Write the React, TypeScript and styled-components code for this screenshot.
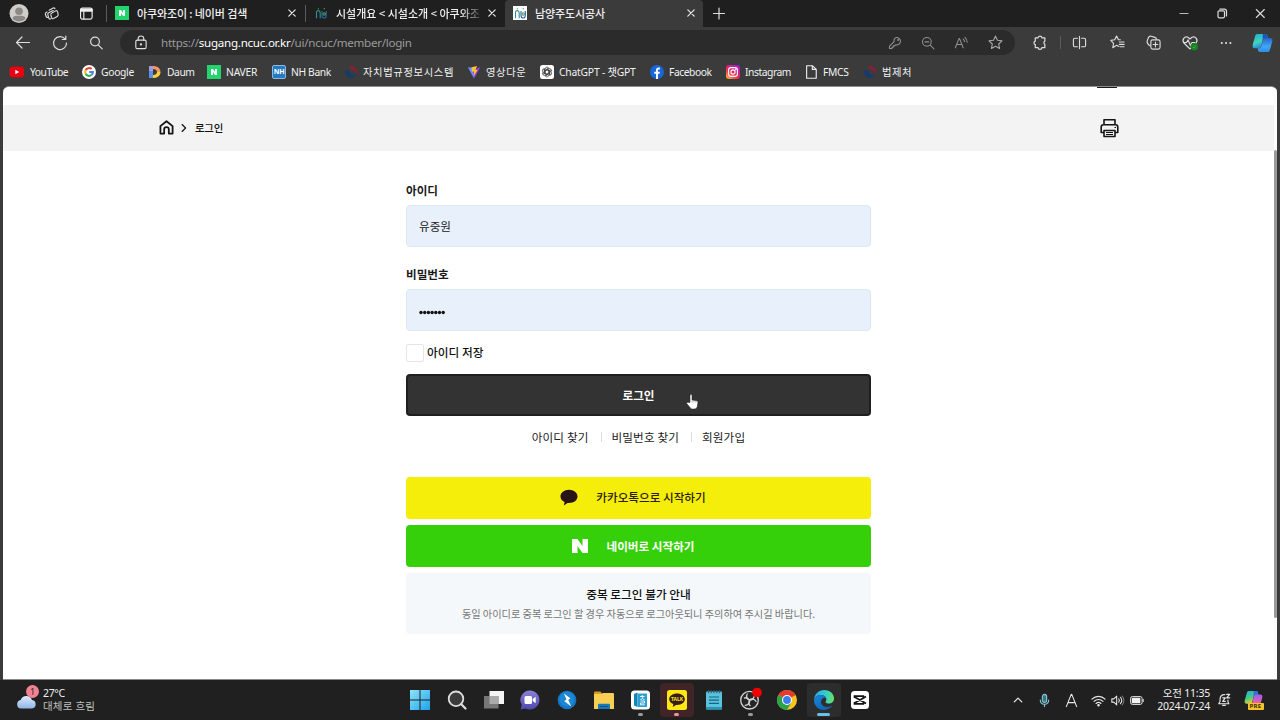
import React from "react";
import styled, { createGlobalStyle } from "styled-components";

const GlobalStyle = createGlobalStyle`
  * { box-sizing: border-box; }
  html, body { margin: 0; padding: 0; background: #202020; }
  body { overflow: hidden; }
  svg { display: block; flex: none; overflow: visible; }
`;

const ui = `"Noto Sans", "Noto Sans CJK KR", sans-serif`;
const kr = `"Noto Sans CJK KR", "Noto Sans", sans-serif`;

const Desktop = styled.div`
  width: 1280px;
  height: 720px;
  display: flex;
  flex-direction: column;
  background: #3b3b3b;
  font-family: ${ui};
  color: #f1f1f1;
  overflow: hidden;
`;

/* ---------- browser chrome ---------- */

const TabStrip = styled.div`
  height: 27px;
  flex: none;
  display: flex;
  background: #1f1f1f;
`;

const Cell = styled.div<{ $w: number }>`
  width: ${(p) => p.$w}px;
  flex: none;
  display: flex;
  align-items: center;
  justify-content: center;
`;

const Rule = styled.div<{ $h?: number }>`
  width: 1px;
  height: ${(p) => p.$h ?? 17}px;
  flex: none;
  align-self: center;
  background: #5c5c5c;
`;

const Tab = styled.div<{ $w: number; $active?: boolean; $pr: number }>`
  width: ${(p) => p.$w}px;
  flex: none;
  display: flex;
  align-items: center;
  padding: 0 ${(p) => p.$pr}px 1px 8px;
  background: ${(p) => (p.$active ? "#3b3b3b" : "transparent")};
  border-radius: ${(p) => (p.$active ? "4px 4px 0 0" : "0")};
`;

const TabTitle = styled.div<{ $w: number; $fade?: boolean; $ls?: number }>`
  width: ${(p) => p.$w}px;
  margin-left: 8px;
  margin-right: auto;
  white-space: nowrap;
  font: 500 11px/20px ${kr};
  letter-spacing: ${(p) => p.$ls ?? 0}px;
  color: #f0f0f0;
  ${(p) => p.$fade && "mask-image: linear-gradient(to right, #000 86%, transparent 103%);"}
`;

const Toolbar = styled.div`
  height: 31px;
  flex: none;
  display: flex;
  align-items: center;
  padding-left: 5px;
`;

const AddressBar = styled.div`
  width: 895px;
  height: 25px;
  margin-left: 6px;
  flex: none;
  display: flex;
  align-items: center;
  padding-left: 13px;
  padding-right: 3px;
  border-radius: 13px;
  background: #2b2b2b;
`;

const Url = styled.div`
  margin-left: 13px;
  margin-right: auto;
  font: 400 11.6px/24px ${ui};
  letter-spacing: -0.27px;
  color: #9b9b9b;
  b { font-weight: 400; color: #fff; }
`;

const Bookmarks = styled.div`
  height: 28px;
  flex: none;
  display: flex;
  align-items: center;
  padding-left: 9px;
`;

const Bookmark = styled.div<{ $w: number; $ls?: number }>`
  width: ${(p) => p.$w}px;
  flex: none;
  display: flex;
  align-items: center;
  gap: 5px;
  white-space: nowrap;
  font: 400 10.3px/20px ${ui};
  letter-spacing: ${(p) => p.$ls ?? -0.45}px;
  color: #f2f2f2;
`;

/* ---------- page ---------- */

const Viewport = styled.div`
  width: 1274px;
  height: 594px;
  margin-left: 3px;
  flex: none;
  display: flex;
  background: #fff;
  border-top: 1px solid #8d8d8d;
  border-bottom: 1px solid #8a8a8a;
  border-radius: 6px 6px 0 0;
  color: #111;
  font-family: ${kr};
  overflow: hidden;
`;

const Page = styled.main`
  width: 1271px;
  flex: none;
  display: flex;
  flex-direction: column;
  align-items: center;
`;

const HeaderRemnant = styled.div`
  width: 100%;
  height: 18px;
  flex: none;
  padding-left: 1094px;
  &::before {
    content: "";
    display: block;
    width: 20px;
    height: 1px;
    background: #1b1b1b;
  }
`;

const Breadcrumb = styled.nav`
  width: 100%;
  height: 46px;
  flex: none;
  display: flex;
  align-items: center;
  padding: 0 155px 1px 156px;
  background: #f3f3f3;
  font-size: 10.4px;
  font-weight: 500;
  letter-spacing: -0.2px;
`;

const CrumbArrow = styled(Cell)`
  margin-left: 3px;
`;

const Crumb = styled.span`
  margin-left: 5px;
  margin-right: auto;
`;

const Form = styled.form`
  width: 465px;
  padding-top: 29px;
  display: flex;
  flex-direction: column;
`;

const Label = styled.label`
  height: 20px;
  font-size: 11.6px;
  line-height: 20px;
  font-weight: 700;
  color: #1a1a1a;
`;

const Field = styled.div<{ $last?: boolean }>`
  height: 42px;
  margin: 5px 0 ${(p) => (p.$last ? 12 : 17)}px;
  padding: 0 12px;
  display: flex;
  align-items: center;
  background: #e8f0fc;
  border: 1px solid #dfe7ee;
  border-radius: 4px;
  font-size: 11.6px;
  color: #222;
`;

const SaveRow = styled.div`
  height: 19px;
  display: flex;
  align-items: center;
  gap: 3px;
  font-size: 11.7px;
  line-height: 17px;
  font-weight: 500;
  span + span { padding-bottom: 2px; }
`;

const Checkbox = styled.span`
  width: 18px;
  height: 18px;
  border: 1px solid #e6e6e6;
  border-radius: 2px;
  background: #fff;
`;

const LoginButton = styled.div`
  height: 42px;
  margin-top: 12px;
  display: flex;
  align-items: center;
  justify-content: center;
  background: #333;
  border: 2px solid #1f1f1f;
  border-radius: 4px;
  color: #fff;
  font-size: 11.6px;
  letter-spacing: 0.05px;
  font-weight: 700;
`;

const Links = styled.div`
  height: 20px;
  margin-top: 11px;
  display: flex;
  align-items: center;
  justify-content: center;
  font-size: 11.6px;
  letter-spacing: 0.13px;
  color: #222;
  span + span {
    margin-left: 12px;
    padding-left: 11px;
    background: linear-gradient(#dcdcdc, #dcdcdc) left center / 1px 10px no-repeat;
  }
`;

const SocialButton = styled.div<{ $bg: string; $fg: string; $weight: number; $top: number; $gap: number; $lift?: number }>`
  height: 42px;
  margin-top: ${(p) => p.$top}px;
  display: flex;
  align-items: center;
  justify-content: center;
  gap: ${(p) => p.$gap}px;
  padding-right: 11px;
  padding-bottom: ${(p) => p.$lift ?? 0}px;
  border-radius: 4px;
  background: ${(p) => p.$bg};
  color: ${(p) => p.$fg};
  font-size: 11.6px;
  line-height: 18px;
  font-weight: ${(p) => p.$weight};
`;

const Notice = styled.div`
  height: 61px;
  margin-top: 6px;
  padding-top: 11px;
  display: flex;
  flex-direction: column;
  align-items: center;
  background: #f5f8fa;
  border-radius: 4px;
`;

const NoticeTitle = styled.div`
  font-size: 11.7px;
  line-height: 20px;
  font-weight: 500;
  color: #111;
`;

const NoticeText = styled.div`
  font-size: 10.2px;
  line-height: 20px;
  letter-spacing: -0.01px;
  color: #777;
  white-space: nowrap;
`;

const ScrollTrack = styled.div`
  flex: 1;
  padding-top: 63px;
  background: #fdfdfd;
  &::before {
    content: "";
    display: block;
    height: 468px;
    background: #9a9a9a;
    border-radius: 2px;
  }
`;

/* ---------- taskbar ---------- */

const Taskbar = styled.footer`
  height: 40px;
  flex: none;
  display: flex;
  align-items: center;
  background: #202020;
`;

const Weather = styled.div`
  width: 401px;
  flex: none;
  display: flex;
  padding-left: 16px;
  gap: 3px;
  font-size: 10.5px;
  line-height: 13px;
`;

const WeatherText = styled.div`
  padding-top: 1px;
  letter-spacing: -0.35px;
  div + div { color: #c2c2c2; letter-spacing: 0.2px; }
`;

const AppSlot = styled.div<{ $tint?: string }>`
  width: 33.7px;
  height: 34px;
  margin-right: 3px;
  flex: none;
  display: flex;
  flex-direction: column;
  align-items: center;
  padding-top: 7px;
  border-radius: 4px;
  background: ${(p) => p.$tint ?? "transparent"};
`;

const Running = styled.i<{ $w: number; $c: string }>`
  width: ${(p) => p.$w}px;
  height: 3px;
  margin-top: 3px;
  border-radius: 2px;
  background: ${(p) => p.$c};
`;

const Tray = styled.div`
  margin-left: auto;
  display: flex;
  align-items: center;
`;

const Clock = styled.div`
  width: 60px;
  padding-right: 2px;
  text-align: right;
  font-size: 10.5px;
  line-height: 13px;
  letter-spacing: -0.2px;
  white-space: nowrap;
`;

const Pointer = styled.div`
  position: absolute;
  left: 686px;
  top: 394px;
`;

/* ---------- icons ---------- */

type IconProps = { s?: number; c?: string; w?: number; children?: React.ReactNode };
const Line = ({ s = 16, c = "#dcdcdc", w = 1.2, children }: IconProps) => (
  <svg width={s} height={s} viewBox="0 0 16 16" fill="none" stroke={c} strokeWidth={w} strokeLinecap="round" strokeLinejoin="round">
    {children}
  </svg>
);

const Close = () => <Line s={16} w={1.2} c="#e8e8e8"><path d="M4.8 4.8l6.4 6.4M11.2 4.8l-6.4 6.4" /></Line>;

const Avatar = () => (
  <svg width="20" height="20" viewBox="0 0 20 20">
    <circle cx="10" cy="9.500" r="9.5" fill="#cfccca" />
    <circle cx="10" cy="7.2" r="3.8" fill="#8b8886" />
    <path d="M3.6 14.7c0-2.2 2-3 4-3h4.800c2 0 4 .8 4 3-2 2-4 2.700-6.400 2.700s-4.600-.9-6.400-2.700z" fill="#8b8886" />
  </svg>
);

const Naver = () => (
  <svg width="14" height="14" viewBox="0 0 14 14">
    <rect width="14" height="14" fill="#22d46c" />
    <path d="M4 10V4h2l2 3V4h2v6H8L6 7v3z" fill="#fff" />
  </svg>
);

const CityLogo = ({ bg }: { bg?: string }) => (
  <svg width="14" height="14" viewBox="0 0 14 14" fill="none" strokeWidth="1.1">
    {bg && <rect width="14" height="14" fill={bg} />}
    <path d="M2.500 12.300V6" stroke="#2b8ea8" />
    <path d="M2.500 6c.5-2 3.700-2 3.700 1v5.300" stroke="#2f8f8a" />
    <path d="M8 5v4.500c0 3.400 4.300 3.400 4.300 0V5" stroke="#2467a8" />
    <circle cx="10.200" cy="8" r="1.200" stroke="#4a9b60" />
    <path d="M3.800 2.800h1.200M9.600 2.800h1.400" stroke="#4aa46a" />
  </svg>
);

const Gov = () => (
  <svg width="14" height="14" viewBox="0 0 14 14">
    <path d="M1.300 5C.2 9 3 13 7 13c3 0 5-2 5.200-4.600C10.500 11 7 10.700 6.300 8.300 5.800 6.500 3.500 4.500 1.300 5z" fill="#123d6b" />
    <path d="M5 1.600C9 .3 13.500 3 13 7.500c-.1 1-.4 1.600-.8 2C12.500 6.500 9.800 5.500 8.300 4.800 7 4.200 5.500 3.500 5 1.600z" fill="#8c1d38" />
  </svg>
);

const YouTube = () => (
  <svg width="16" height="14" viewBox="0 0 16 14">
    <rect x=".6" y="1.500" width="14.400" height="11" rx="3" fill="#e60012" />
    <path d="M6.300 4.800v4.400L10.200 7z" fill="#fff" />
  </svg>
);

const Google = () => (
  <svg width="14" height="14" viewBox="0 0 14 14" fill="none" strokeWidth="2">
    <circle cx="7" cy="7" r="7" fill="#fff" />
    <path d="M3.600 5.200A3.900 3.900 0 0 1 9.700 4.100" stroke="#ea4335" />
    <path d="M3.600 5.200a3.900 3.900 0 0 0 0 3.600" stroke="#fbbc05" />
    <path d="M3.600 8.800a3.900 3.900 0 0 0 5.900 1.200" stroke="#34a853" />
    <path d="M9.500 10A3.900 3.900 0 0 0 10.900 7.100H7.200" stroke="#4285f4" />
  </svg>
);

const Daum = () => (
  <svg width="14" height="14" viewBox="0 0 14 14">
    <path d="M1 1h4v12H1z" fill="#5b91e8" />
    <path d="M1 1h4v5H1z" fill="#a899dc" />
    <path d="M5 1c4 0 7.500 2 7.500 6H9c0-2-1.500-3-4-3z" fill="#f39a62" />
    <path d="M12.500 7c0 4-3.500 6-7.500 6v-3c2.500 0 4-1 4-3z" fill="#f7cf3f" />
  </svg>
);

const Badge = styled.span`
  width: 14px;
  height: 14px;
  flex: none;
  border-radius: 2px;
  border: 1px solid #8db8df;
  background: #247bc4;
  color: #fff;
  font: 700 7px/12px "Noto Sans", sans-serif;
  letter-spacing: -0.2px;
  text-align: center;
`;

const Prism = () => (
  <svg width="14" height="14" viewBox="0 0 14 14">
    <path d="M.8 2.200L7 13.400 7.500 3z" fill="#6c8cff" />
    <path d="M13.200 2.200L7 13.400 6 5z" fill="#a63ee8" />
    <path d="M4.500 2.200L10 1 8.500 5h2L6.800 11l.3-4.600H4.800z" fill="#ffc32b" />
  </svg>
);

const Gpt = () => (
  <svg width="14" height="14" viewBox="0 0 14 14" fill="none" stroke="#333" strokeWidth=".8">
    <rect width="14" height="14" rx="2.500" fill="#fff" stroke="none" />
    {[0, 60, 120, 180, 240, 300].map((a) => (
      <path key={a} transform={`rotate(${a} 7 7)`} d="M5 7.800V4.200a2 2 0 0 1 3.600-1.200L5.600 4.800M7 4.700l2 1.200" />
    ))}
  </svg>
);

const Facebook = () => (
  <svg width="14" height="14" viewBox="0 0 14 14">
    <circle cx="7" cy="7" r="7" fill="#1766dc" />
    <path d="M6 14V8.800H4.300V6.700H6V5.200C6 3.400 7 2.500 8.600 2.500l1.300.1v1.800h-.9c-.8 0-1 .4-1 1v1.300h1.900l-.3 2.100H8V14z" fill="#fff" />
  </svg>
);

const Instagram = () => (
  <svg width="14" height="14" viewBox="0 0 14 14" fill="none" stroke="#fff" strokeWidth="1.100">
    <defs>
      <linearGradient id="insta" x1="0" y1="1" x2=".8" y2="0">
        <stop offset="0" stopColor="#ffc53d" />
        <stop offset=".45" stopColor="#ee2a4f" />
        <stop offset="1" stopColor="#a11fd0" />
      </linearGradient>
    </defs>
    <rect width="14" height="14" rx="3" fill="url(#insta)" stroke="none" />
    <rect x="2.600" y="2.600" width="8.800" height="8.800" rx="2.500" />
    <circle cx="7" cy="7" r="2.100" />
    <circle cx="9.600" cy="4.400" r=".3" />
  </svg>
);

const Copilot = ({ pre }: { pre?: boolean }) => (
  <svg width={pre ? 19 : 21} height={pre ? 18 : 20} viewBox="0 0 21 20">
    <defs>
      <linearGradient id={pre ? "cpA" : "cpB"} x1="0" y1="0" x2=".4" y2="1">
        <stop offset="0" stopColor={pre ? "#26a9f0" : "#1fa6d8"} />
        <stop offset=".6" stopColor={pre ? "#47ce79" : "#42d6bb"} />
        <stop offset="1" stopColor={pre ? "#f2cc35" : "#2786d8"} />
      </linearGradient>
      <linearGradient id={pre ? "cpC" : "cpD"} x1="0" y1="0" x2="0" y2="1">
        <stop offset="0" stopColor={pre ? "#9a61ed" : "#2466c9"} />
        <stop offset=".6" stopColor={pre ? "#e45bba" : "#43a6f4"} />
        <stop offset="1" stopColor={pre ? "#f7863f" : "#2b8ee9"} />
      </linearGradient>
    </defs>
    <path d="M5 1h8.500c1 0 1.500.6 1.800 1.500L16 5h-3c-1.200 0-1.800.8-2.200 2L9 13.500c-.4 1.200-1 1.800-2.200 1.800H3C.8 15.300.2 13.700.8 11.500L3 3.500C3.400 2 4 1 5 1z" fill={`url(#${pre ? "cpA" : "cpB"})`} />
    <path d="M10.800 1h2.700c1 0 1.500.6 1.800 1.500L16 5h-3c-1.200 0-1.800.8-2.200 2l-.5 1.700z" fill={pre ? "#2673e0" : "#1d57b5"} />
    <path d="M16 19H8c-1 0-1.500-.5-1.800-1.500L5.600 15.300H7c1.200 0 1.800-.6 2.200-1.800L11 7c.4-1.200 1-2 2.200-2H18c2.200 0 2.800 1.600 2.200 3.700L18 16.500c-.4 1.500-1 2.500-2 2.500z" fill={`url(#${pre ? "cpC" : "cpD"})`} />
  </svg>
);

const PreWrap = styled.div`
  position: relative;
  width: 20px;
  height: 20px;
`;

const PreTag = styled.span`
  position: absolute;
  left: 4px;
  top: 13px;
  width: 16px;
  height: 7px;
  border-radius: 1px;
  background: #f3c32d;
  color: #3a2c00;
  font: 700 6px/7px "Noto Sans", sans-serif;
  letter-spacing: 0.4px;
  text-align: center;
`;

const CloudWrap = styled.div`
  position: relative;
  width: 24px;
  height: 28px;
`;

const Count = styled.span`
  position: absolute;
  left: 10px;
  top: -1px;
  width: 13px;
  height: 13px;
  border-radius: 50%;
  background: #f08294;
  color: #3d1a20;
  font: 400 9px/13px ${ui};
  text-align: center;
`;

const TalkWrap = styled.div`
  position: relative;
  height: 20px;
  span {
    position: absolute;
    left: 0;
    top: 4px;
    width: 20px;
    text-align: center;
    color: #ffe812;
    font: 700 5px/10px "Noto Sans", sans-serif;
  }
`;

const Dot = ({ c = "#9a9a9a", w = 5 }) => <Running $w={w} $c={c} />;

const bookmarks: { label: string; w: number; ls?: number; icon: React.ReactNode }[] = [
  { label: "YouTube", w: 73, ls: -0.5, icon: <YouTube /> },
  { label: "Google", w: 66, ls: -0.3, icon: <Google /> },
  { label: "Daum", w: 59, icon: <Daum /> },
  { label: "NAVER", w: 65, ls: -0.2, icon: <Naver /> },
  { label: "NH Bank", w: 72, ls: -0.35, icon: <Badge>NH</Badge> },
  { label: "자치법규정보시스템", w: 123, ls: 0.65, icon: <Gov /> },
  { label: "영상다운", w: 73, ls: 0.6, icon: <Prism /> },
  { label: "ChatGPT - 챗GPT", w: 110, ls: -0.2, icon: <Gpt /> },
  { label: "Facebook", w: 76, icon: <Facebook /> },
  { label: "Instagram", w: 78, icon: <Instagram /> },
  { label: "FMCS", w: 59, ls: -0.3, icon: <Line s={14} c="#eee" w={1.3}><path d="M3 .8h6.500L14 5v10.200H3zM9.500.8V5H14" /></Line> },
  { label: "법제처", w: 60, ls: 0.5, icon: <Gov /> },
];

const StartIcon = () => (
  <svg width="20" height="20" viewBox="0 0 20 20">
    <defs><linearGradient id="win" x1="0" y1="0" x2="1" y2="1"><stop stopColor="#8ee3fb" /><stop offset="1" stopColor="#1ca3ea" /></linearGradient></defs>
    <path d="M0 0h9.500v9.500H0zM10.500 0H20v9.500h-9.500zM0 10.500h9.500V20H0zM10.500 10.500H20V20h-9.500z" fill="url(#win)" />
  </svg>
);
const SearchIcon = () => (
  <svg width="20" height="20" viewBox="0 0 20 20" fill="#3c3c3c" stroke="#dedede" strokeWidth="1.800" strokeLinecap="round">
    <circle cx="9" cy="8.800" r="7.300" /><path d="M14.300 14.200l4.200 4.300" strokeWidth="2.200" />
  </svg>
);
const TaskViewIcon = () => (
  <svg width="20" height="20" viewBox="0 0 20 20">
    <rect x="5.500" y="1" width="14.500" height="13" fill="#f4f4f4" />
    <rect x="0" y="6" width="14.500" height="12.500" fill="#777" />
    <path d="M5.500 6h9v8h-9z" fill="#aaa" />
  </svg>
);
const ChatIcon = () => (
  <svg width="20" height="20" viewBox="0 0 20 20">
    <defs><linearGradient id="chat" x1="0" y1="0" x2="0" y2="1"><stop stopColor="#8a84d6" /><stop offset="1" stopColor="#5046ae" /></linearGradient></defs>
    <path d="M10 .5a9.500 9.500 0 1 1-4.500 17.900L.7 19.500l1-4.700A9.500 9.500 0 0 1 10 .5z" fill="url(#chat)" />
    <rect x="4.500" y="6" width="7.500" height="8" rx="1.500" fill="#fff" /><path d="M12.700 9l3-2.200v6.400l-3-2.200z" fill="#fff" />
  </svg>
);
const BoltIcon = () => (
  <svg width="20" height="20" viewBox="0 0 20 20">
    <circle cx="10" cy="10" r="9.300" fill="#1675c4" /><circle cx="10" cy="9" r="7.500" fill="#1c87d4" />
    <path d="M7 3.500l6.500 5-2.300 1.300 3 6.700-7-5.500 2.300-1.200z" fill="#fff" />
  </svg>
);
const FolderIcon = () => (
  <svg width="20" height="20" viewBox="0 0 20 20">
    <path d="M0 3c0-.8.400-1.500 1.300-1.500h5L8.500 4H0z" fill="#d99a20" />
    <path d="M0 4h7.500l1.500-1h9.500c1 0 1.500.5 1.500 1.300V19H0z" fill="#f8cf55" />
    <path d="M4 15c0-.8.500-1.200 1.200-1.200h9.600c.7 0 1.200.4 1.200 1.200v4H4z" fill="#1878b8" />
    <path d="M6 16.500h8" stroke="#0e568c" />
  </svg>
);
const DictIcon = () => (
  <svg width="19" height="20" viewBox="0 0 19 20" fill="none">
    <rect y=".5" width="19" height="19" rx="3.500" fill="#fff" />
    <path d="M3 4l3.500-1.500v14.500L3 15.500z" fill="#1684b5" /><path d="M6.500 3.500H16v13.500H6.500z" fill="#2ba0d0" />
    <path d="M9 6.500h4.500M11.200 5v1.500M9.500 9.500c1.500 0 2-1 2-2 0 1 .5 2 2 2M9.500 11h4v2h-4v1.800h4.200" stroke="#fff" strokeWidth=".9" />
  </svg>
);
const TalkIcon = () => (
  <TalkWrap>
    <svg width="20" height="20" viewBox="0 0 20 20">
      <rect width="20" height="20" rx="2.500" fill="#ffe812" />
      <path d="M10 3.500c4.500 0 7.800 2.500 7.800 5.800S14.500 15 10 15l-1-.1L5.800 17l.5-2.900C3.800 13.200 2.200 11.400 2.200 9.300c0-3.300 3.300-5.800 7.800-5.800z" fill="#371d1e" />
    </svg>
    <span>TALK</span>
  </TalkWrap>
);
const NotepadIcon = () => (
  <svg width="20" height="20" viewBox="0 0 20 20">
    <rect x="2" y="1.500" width="16" height="18" rx="1" fill="#59c3dd" /><path d="M2 17h16v2.500H2z" fill="#2b93b6" />
    <path d="M5 7h10M5 10.200h10M5 13.400h10" stroke="#1b6484" strokeWidth="1.200" />
    <path d="M4.500.3v3M7.200.3v3M10 .3v3M12.800.3v3M15.500.3v3" stroke="#2d6679" strokeWidth="1.200" />
  </svg>
);
const ObsIcon = () => (
  <svg width="20" height="20" viewBox="0 0 20 20" fill="none" stroke="#d5d5d5" strokeWidth="1.300">
    <circle cx="9.500" cy="10.200" r="8.800" fill="#252525" />
    {[0, 120, 240].map((a) => <path key={a} transform={`rotate(${a} 9.500 10.200)`} d="M7.500 3.500C5.500 6.500 7 9.600 9.500 10.200c2.800-.2 4.300-1.800 4.600-3.800" />)}
    <circle cx="17" cy="2.500" r="4.800" fill="#f40000" stroke="none" />
  </svg>
);
const ChromeIcon = () => (
  <svg width="20" height="20" viewBox="0 0 20 20">
    <circle cx="10" cy="10" r="10" fill="#f8c51c" />
    <path d="M10 10L1.340 5A10 10 0 0 1 18.660 5z" fill="#e33b2e" />
    <path d="M10 10l-8.660-5A10 10 0 0 0 10 20l4.330-7.500z" fill="#2ba24c" />
    <circle cx="10" cy="10" r="5" fill="#fff" /><circle cx="10" cy="10" r="3.900" fill="#3b7ded" />
  </svg>
);
const EdgeIcon = () => (
  <svg width="20" height="20" viewBox="0 0 20 20">
    <defs>
      <linearGradient id="edgeTop" x1="0" y1=".4" x2="1" y2=".5"><stop stopColor="#27a9e5" /><stop offset=".6" stopColor="#37cfc8" /><stop offset="1" stopColor="#67e362" /></linearGradient>
      <linearGradient id="edgeLow" x1="0" y1="0" x2="1" y2="1"><stop stopColor="#1688dc" /><stop offset="1" stopColor="#105ba8" /></linearGradient>
    </defs>
    <path d="M0 9.500C.5 4 4.700 0 10.200 0 16 0 20 4 20 8.500c0 3.300-2.500 5-5 5-2.300 0-3.500-.8-3.500-1.600 0-.6.900-1 .9-2.600C12.400 7 10 5 6.700 5 3.500 5 1 6.700 0 9.500z" fill="url(#edgeTop)" />
    <path d="M0 9.500C1 6.700 3.500 5 6.700 5c3.300 0 5.500 1.800 5.700 4-.3-.9-1.300-1.500-2.300-1.300C8.300 8 7 9.800 7 11.800 7 15 9.700 17 12.800 17c2.200 0 3.900-.7 5.700-1.700C17 18 13.700 20 10 20 4 20 0 15.500 0 10z" fill="url(#edgeLow)" />
  </svg>
);
const CapCutIcon = () => (
  <svg width="18" height="20" viewBox="0 0 18 20" fill="none" stroke="#151515" strokeWidth="1.700">
    <rect y="1" width="18" height="18" rx="3.500" fill="#fff" stroke="none" />
    <path d="M15 6.500L12.500 8 3.500 13M15 13.500L12.500 12 3.500 7M12.300 8V6.200H3.500V8M12.300 12v1.800H3.500V12" />
  </svg>
);

export default function App() {
  return (
    <Desktop>
      <GlobalStyle />
      <TabStrip>
        <Cell $w={37}><Avatar /></Cell>
        <Cell $w={29}>
          <Line s={15}>
            <path d="M5.500 4.500l4.300-2.300c.8-.4 1.500-.1 1.900.6M3.200 6.300C1.700 7 1 7.500 1.400 8.600l.9 2.600c.3.900.9 1.200 1.700 1" />
            <path d="M5 7.300l4.800-2.500M5 7.300c-1 .6-1.200 1-.9 2l1 3.600c.3 1 1 1.300 2 .8" />
            <path d="M8.700 7.200l3.700-2c1-.5 1.800-.2 2 .8l.7 3c.2 1-.1 1.600-1 2.100l-4 2.200c-1 .5-1.700.2-2-.8l-.8-3c-.2-1 .3-1.800 1.400-2.300z" />
          </Line>
        </Cell>
        <Cell $w={40}>
          <Line s={14} c="#eee" w={1.300}>
            <rect x="1.800" y="1.300" width="13.200" height="12.500" rx="2" />
            <path d="M2 3h13M2 4.500h13" strokeWidth="1.800" /><path d="M5.500 5.500v8" />
          </Line>
        </Cell>
        <Rule />
        <Tab $w={198} $pr={5}><Naver /><TabTitle $w={130} $ls={-0.12}>아쿠와조이 : 네이버 검색</TabTitle><Close /></Tab>
        <Rule />
        <Tab $w={199} $pr={5}><CityLogo /><TabTitle $w={144} $fade>시설개요 &lt; 시설소개 &lt; 아쿠와조</TabTitle><Close /></Tab>
        <Tab $w={198} $pr={4} $active><CityLogo bg="#fff" /><TabTitle $w={120} $ls={-0.1}>남양주도시공사</TabTitle><Close /></Tab>
        <Cell $w={32}><Line s={16}><path d="M8 2v11M2.500 7.500h11" /></Line></Cell>
        <Cell $w={430} />
        <Cell $w={38}><Line s={16} w={1.200} c="#bbb"><path d="M4 7.500h8" /></Line></Cell>
        <Cell $w={38}>
          <Line s={16} w={1.200}><rect x="4" y="4.800" width="6.500" height="7" rx="1.200" /><path d="M5.800 3.200h4.700a2 2 0 0 1 2 2v4.800" /></Line>
        </Cell>
        <Cell $w={38}><Line s={16} w={1.100}><path d="M4.300 3.500l8 8M12.300 3.500l-8 8" /></Line></Cell>
      </TabStrip>

      <Toolbar>
        <Cell $w={36}><Line><path d="M14.500 7.500h-13M7 2L1.500 7.500 7 13" /></Line></Cell>
        <Cell $w={37}><Line><path d="M13.200 4.200A6.500 6.500 0 1 0 14.500 8M13.800 1v3.500h-3.500" /></Line></Cell>
        <Cell $w={36}><Line><circle cx="7" cy="6.500" r="4.400" /><path d="M10.200 9.800l4 4" /></Line></Cell>
        <AddressBar>
          <Line s={15} c="#e0e0e0"><rect x="3" y="5.500" width="11" height="9" rx="1.500" /><path d="M5.500 5.500V4a3 3 0 0 1 6 0v1.500" /><circle cx="8.500" cy="10" r=".6" fill="#e0e0e0" /></Line>
          <Url>https://<b>sugang.ncuc.or.kr</b>/ui/ncuc/member/login</Url>
          <Cell $w={33}><Line s={14} c="#919191"><path d="M9.500 1.800a4.200 4.200 0 1 1-.6 8.200L7.500 11.300H6v1.500H4.500v1.500H1.700v-2.600L7 6.400a4 4 0 0 1 2.500-4.600z" /><circle cx="11.500" cy="4.500" r=".5" /></Line></Cell>
          <Cell $w={33}><Line s={14} c="#919191"><circle cx="6.700" cy="6.700" r="5" /><path d="M10.500 10.500l4.300 4.300M4.500 6.700h4.400" /></Line></Cell>
          <Cell $w={34}><Line s={14} c="#919191"><path d="M1.500 13.500L5.700 3h.6l4.200 10.500M3.100 9.800h5.800M10.500 3.500a5 5 0 0 1 1.500 3M12.500 1.500a8 8 0 0 1 2.500 5.500" /></Line></Cell>
          <Cell $w={34}><Line s={15} c="#a8a8a8"><path d="M8 1.200l2.100 4.400 4.800.6-3.500 3.400.9 4.800L8 12.100l-4.300 2.300.9-4.800L1.100 6.200l4.800-.6z" /></Line></Cell>
        </AddressBar>
        <Cell $w={4} />
        <Cell $w={41}><Line s={15} w={1.300}><path d="M5 3h1.500a2 1.800 0 0 1 4 0h3.200v3.500a2 2 0 0 0 0 3.500v3.500h-3.200a2 1.800 0 0 1-4 0H3.500V10.300a2 2 0 0 1 0-3.800V3z" /></Line></Cell>
        <Cell $w={0}><Rule $h={13} /></Cell>
        <Cell $w={39}><Line s={15}><path d="M8 1.500v13M5.800 3.500H3A1.500 1.500 0 0 0 1.500 5v6A1.500 1.500 0 0 0 3 12.500h2.800M10.200 3.500H13A1.500 1.500 0 0 1 14.500 5v6a1.500 1.500 0 0 1-1.500 1.500h-2.800" /></Line></Cell>
        <Cell $w={36}><Line s={15}><path d="M9.500 12.300L7 11l-4 2.500.8-4.500L.8 5.700l4.200-.6L7 1.200l2 3.900h2M10 7.500h5M10 10h5M11 12.500h4" /></Line></Cell>
        <Cell $w={36}><Line s={15}><path d="M4 11.500C2.500 10.500 1 8 1.200 6.500L2.500 3C3 1.600 4 1 5.500 1.300L9.500 2.500c1 .3 1.500 1 1.700 1.700" /><rect x="5.200" y="5.200" width="9.800" height="9.800" rx="1.900" /><path d="M10.100 7.600v5M7.600 10.100h5" /></Line></Cell>
        <Cell $w={38}>
          <svg width="16" height="16" viewBox="0 0 16 16" fill="none" stroke="#dcdcdc" strokeWidth="1.200">
            <path d="M8 14L2 8C-.5 5 2.500.8 6 2.200L8 4l2-1.800c3.500-1.400 6.500 2.800 4 5.800L8 14M1 7.500h3.500L6 5l2.500 5.500L10 7.500h3" />
            <circle cx="12.300" cy="11.700" r="3.700" fill="#15831f" stroke="none" /><path d="M10.700 11.800l1.200 1.200 2-2.400" strokeWidth=".8" stroke="#56b35c" />
          </svg>
        </Cell>
        <Cell $w={34}><Line s={16}><path d="M3.700 8h.2M8 8h.2M12.300 8h.2" strokeWidth="1.900" /></Line></Cell>
        <Cell $w={38}><Copilot /></Cell>
      </Toolbar>

      <Bookmarks>
        {bookmarks.map((b, i) => <Bookmark key={i} $w={b.w} $ls={b.ls}>{b.icon}{b.label}</Bookmark>)}
      </Bookmarks>

      <Viewport>
        <Page>
          <HeaderRemnant />
          <Breadcrumb>
            <Line s={15} c="#151515" w={1.900}><path d="M1.500 6.500L8 1.300l6.500 5.200V14.500h-4V10a2.500 2.500 0 0 0-5 0v4.500h-4z" /></Line>
            <CrumbArrow $w={13}><Line s={10} c="#151515" w={2}><path d="M5 2.500L10.500 8 5 13.500" /></Line></CrumbArrow>
            <Crumb>로그인</Crumb>
            <svg width="19" height="20" viewBox="0 0 19 20" fill="none" stroke="#151515" strokeWidth="1.600" strokeLinejoin="round">
              <path d="M4 6.500V1.800h11v4.700M4 14.500H1.200V9c0-1.500.8-2.300 2.300-2.300h12c1.500 0 2.300.8 2.300 2.300v5.500H15" />
              <path d="M4 12.500h11v6H4z" /><path d="M6 14.500h7M6 16.500h7M14.500 9.500h1.500" strokeWidth="1" />
            </svg>
          </Breadcrumb>
          <Form>
            <Label>아이디</Label>
            <Field>유중원</Field>
            <Label>비밀번호</Label>
            <Field $last>
              <svg width="27" height="6" viewBox="0 0 27 6" fill="#111">
                {[0, 1, 2, 3, 4, 5, 6].map((i) => <circle key={i} cx={2 + i * 3.700} cy="5.500" r="1.700" />)}
              </svg>
            </Field>
            <SaveRow><Checkbox /><span>아이디 저장</span></SaveRow>
            <LoginButton>로그인</LoginButton>
            <Links><span>아이디 찾기</span><span>비밀번호 찾기</span><span>회원가입</span></Links>
            <SocialButton $bg="#f5ed0a" $fg="#2a1d10" $weight={500} $top={30} $gap={18} $lift={2}>
              <svg width="18" height="17" viewBox="0 0 18 17"><path d="M9 .8c4.800 0 8.500 3 8.500 6.700S13.800 14 9 14l-1.500-.1L3.800 16.500l.8-3.500C2 11.800.5 9.800.5 7.500.5 3.800 4.200.8 9 .8z" fill="#281416" /></svg>
              카카오톡으로 시작하기
            </SocialButton>
            <SocialButton $bg="#36d00a" $fg="#fff" $weight={700} $top={6} $gap={19}>
              <svg width="16" height="14" viewBox="0 0 16 14"><path d="M0 0h5.500l5 7V0H16v14h-5.500l-5-7v7H0z" fill="#fff" /></svg>
              네이버로 시작하기
            </SocialButton>
            <Notice>
              <NoticeTitle>중복 로그인 불가 안내</NoticeTitle>
              <NoticeText>동일 아이디로 중복 로그인 할 경우 자동으로 로그아웃되니 주의하여 주시길 바랍니다.</NoticeText>
            </Notice>
          </Form>
        </Page>
        <ScrollTrack />
      </Viewport>

      <Taskbar>
        <Weather>
          <CloudWrap>
            <svg width="21" height="28" viewBox="0 0 21 28">
              <defs><linearGradient id="cloud" x1="0" y1="0" x2="0" y2="1"><stop stopColor="#e0ecfb" /><stop offset="1" stopColor="#8fb4e8" /></linearGradient></defs>
              <path d="M5 22.500a4.300 4.300 0 0 1-.3-8.500 6 6 0 0 1 11.300 0A4.300 4.300 0 0 1 16 22.500z" fill="url(#cloud)" />
            </svg>
            <Count>1</Count>
          </CloudWrap>
          <WeatherText><div>27°C</div><div>대체로 흐림</div></WeatherText>
        </Weather>
        <Cell $w={2.3} />
        <AppSlot><StartIcon /></AppSlot>
        <AppSlot><SearchIcon /></AppSlot>
        <AppSlot><TaskViewIcon /></AppSlot>
        <AppSlot><ChatIcon /></AppSlot>
        <AppSlot><BoltIcon /></AppSlot>
        <AppSlot><FolderIcon /></AppSlot>
        <AppSlot><DictIcon /><Dot /></AppSlot>
        <AppSlot $tint="#402427"><TalkIcon /><Dot c="#f191a4" /></AppSlot>
        <AppSlot><NotepadIcon /></AppSlot>
        <AppSlot><ObsIcon /><Dot /></AppSlot>
        <AppSlot><ChromeIcon /></AppSlot>
        <AppSlot $tint="#2d2d2d"><EdgeIcon /><Dot c="#69bfe8" w={13} /></AppSlot>
        <AppSlot><CapCutIcon /></AppSlot>
        <Tray>
          <Cell $w={27}><Line s={12} c="#eee" w={1.600}><path d="M3 10.500l5-5 5 5" /></Line></Cell>
          <Cell $w={27}><Line s={15} c="#83c6cf"><rect x="5.700" y="1.500" width="4.600" height="8.500" rx="2.300" fill="#3b7480" /><path d="M3.500 7.500c0 6 9 6 9 0M8 12v2.500" /></Line></Cell>
          <Cell $w={26}><Line s={15} c="#e6e6e6"><path d="M2.500 14.500L7.700 1.500h.6l5.200 13M4.500 10.300h7" /></Line></Cell>
          <Cell $w={28}><Line s={15} c="#e6e6e6"><path d="M1 6.500a10 10 0 0 1 14 0M3.200 8.900a7 7 0 0 1 9.600 0M5.400 11.200a3.800 3.800 0 0 1 5.200 0" /><circle cx="8" cy="13" r=".8" fill="#e6e6e6" /></Line></Cell>
          <Cell $w={10}><Line s={13} c="#e6e6e6" w={1.300}><path d="M1 6h2.500L7 2.500v11L3.500 10H1zM9.500 6a3 3 0 0 1 0 4M11.500 4a6 6 0 0 1 0 8" /><path d="M13.700 2.500a8 8 0 0 1 0 11" stroke="#777" /></Line></Cell>
          <Cell $w={30}><svg width="14" height="9" viewBox="0 0 14 9"><rect x=".6" y=".6" width="11.500" height="7.800" rx="1.800" fill="none" stroke="#e6e6e6" /><rect x="1.800" y="1.800" width="8.500" height="5.400" fill="#f2f2f2" /><path d="M13.200 3v3" stroke="#e6e6e6" /></svg></Cell>
          <Clock>오전 11:35<br />2024-07-24</Clock>
          <Cell $w={24}><Line s={14} c="#e6e6e6" w={1.300}><path d="M9 2C5.500 1.500 3.500 4 3.500 6.500v3L2 12.300h11.500L12.500 10V8M6.500 14.200h3M6.500 5.500h3l-3 4h3M11 1.500h3.500L11 5.500h3.500" /></Line></Cell>
          <Cell $w={35}><PreWrap><Copilot pre /><PreTag>PRE</PreTag></PreWrap></Cell>
          <Cell $w={9} />
        </Tray>
      </Taskbar>
      <Pointer>
        <svg width="13" height="16" viewBox="0 0 13 16">
          <path d="M4 8.500V1.500C4 .3 6 .3 6 1.500V6l4.500.8c1 .2 1.500.8 1.400 1.800l-.6 3.700c-.2 1.500-1.300 2.700-3 2.700H6.500C5.400 15 4.800 14.600 4.200 13.800L.9 9.700C.2 8.700 1.500 7.700 2.500 8.400z" fill="#fff" stroke="#222" strokeWidth=".5" />
          <path d="M6.100 6.500v2M8 6.500v2M9.900 6.800v2" stroke="#777" strokeWidth=".5" />
        </svg>
      </Pointer>
    </Desktop>
  );
}
